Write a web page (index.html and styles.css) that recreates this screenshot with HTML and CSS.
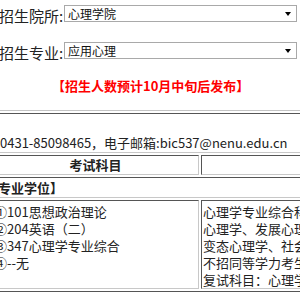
FILE: index.html
```html
<!DOCTYPE html>
<html>

<head>
    <title>招生专业目录</title>
    <link rel="stylesheet" href="styles.css">
</head>

<body>
    <div class="page">
        <div class="search-form">
            <div class="field">
                <label>招生院所:</label>
                <div class="select">
                    <span>心理学院</span>
                    <span class="arrow"></span>
                </div>
            </div>
            <div class="field">
                <label>招生专业:</label>
                <div class="select">
                    <span>应用心理</span>
                    <span class="arrow"></span>
                </div>
            </div>
            <div class="notice">【招生人数预计10月中旬后发布】</div>
        </div>

        <table class="info">
            <tr>
                <td colspan="2" class="contact">0431-85098465，电子邮箱:bic537@nenu.edu.cn</td>
            </tr>
            <tr>
                <th class="subject-col">考试科目</th>
                <th></th>
            </tr>
            <tr>
                <td colspan="2" class="degree">专业学位】</td>
            </tr>
            <tr>
                <td class="subjects">
                    ①101思想政治理论<br>
                    ②204英语（二）<br>
                    ③347心理学专业综合<br>
                    ④--无
                </td>
                <td class="remarks">
                    心理学专业综合科目包括普通<br>
                    心理学、发展心理学、教育心理学、<br>
                    变态心理学、社会心理学。<br>
                    不招同等学力考生。<br>
                    复试科目：心理学综合。
                </td>
            </tr>
        </table>
    </div>
</body>

</html>
```

FILE: styles.css
```css
html,
body {
    margin: 0;
    padding: 0;
    overflow: hidden;
    background-color: #ffffff;
}

body {
    font-family: "Noto Sans CJK SC", sans-serif;
    font-size: 13px;
    color: #222222;
}

.page {
    margin-left: -11px;
    width: 440px;
}

.search-form {
    padding: 5px 0 0 10px;
}

.field {
    display: flex;
    align-items: flex-start;
    height: 17px;
    margin-bottom: 20px;
}

.field label {
    font-size: 15px;
    line-height: 17px;
    margin-top: 2px;
    margin-left: 0;
    width: 65px;
    white-space: nowrap;
}

.select {
    box-sizing: border-box;
    width: 233px;
    height: 17px;
    border: 1px solid #a9a9a9;
    display: flex;
    align-items: center;
    justify-content: space-between;
    padding: 0 5px 0 3px;
    font-size: 12px;
    line-height: 15px;
    color: #111111;
}

.arrow {
    width: 0;
    height: 0;
    border-left: 3px solid transparent;
    border-right: 3px solid transparent;
    border-top: 4px solid #000000;
    margin-top: 1px;
}

.notice {
    margin-top: -3px;
    padding-left: 53px;
    line-height: 20px;
    color: #ff0000;
    font-weight: bold;
    font-size: 13px;
}

.info {
    margin-top: 14px;
    width: 434px;
    border-spacing: 2px;
    border: 1px solid;
    border-color: #c4c4c4 #555555 #555555 #c4c4c4;
}

.info td,
.info th {
    border: 1px solid;
    border-color: #555555 #c8c8c8 #c8c8c8 #555555;
    padding: 1px;
    line-height: 17px;
    vertical-align: top;
    text-align: left;
    white-space: nowrap;
}

.info .contact {
    padding: 20px 1px 1px 7px;
}

.info th {
    padding: 0 1px 1px;
    font-weight: bold;
}

.info .subject-col {
    width: 203px;
    text-align: center;
}

.info .degree {
    padding: 1px 1px 1px 5px;
    font-weight: bold;
}

.info .subjects,
.info .remarks {
    padding: 2px 1px 0;
}
```
